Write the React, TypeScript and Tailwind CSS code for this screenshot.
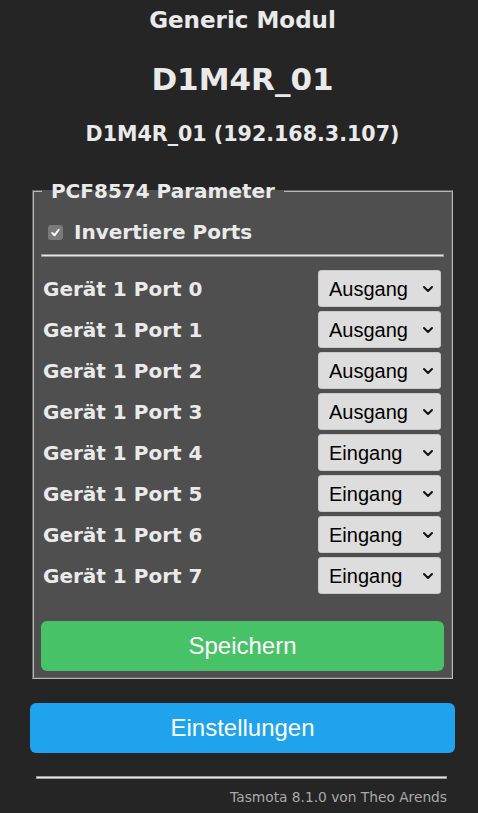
import React from 'react';

const ports = [
  { name: 'Gerät 1 Port 0', mode: 'Ausgang' },
  { name: 'Gerät 1 Port 1', mode: 'Ausgang' },
  { name: 'Gerät 1 Port 2', mode: 'Ausgang' },
  { name: 'Gerät 1 Port 3', mode: 'Ausgang' },
  { name: 'Gerät 1 Port 4', mode: 'Eingang' },
  { name: 'Gerät 1 Port 5', mode: 'Eingang' },
  { name: 'Gerät 1 Port 6', mode: 'Eingang' },
  { name: 'Gerät 1 Port 7', mode: 'Eingang' },
];

const Chevron = () => (
  <svg
    className="pointer-events-none absolute right-[7px] top-1/2 -translate-y-1/2"
    width="12"
    height="8"
    viewBox="0 0 12 8"
    fill="none"
    stroke="#111"
    strokeWidth="2"
    strokeLinecap="round"
    strokeLinejoin="round"
  >
    <path d="M2 2l4 4 4-4" />
  </svg>
);

const PortRow: React.FC<{ name: string; mode: string }> = ({ name, mode }) => (
  <div className="flex h-[37px] items-center justify-between">
    <b className="pl-[2px] text-[20px]">{name}</b>
    <div className="relative mr-[3px] w-[123px]">
      <select
        defaultValue={mode}
        className="h-[37px] w-full appearance-none rounded-[3px] border border-[#c8c8c8] bg-[#dddddd] pl-[10px] font-['Liberation_Sans',Arial,sans-serif] text-[20px] text-black"
      >
        <option>Eingang</option>
        <option>Ausgang</option>
      </select>
      <Chevron />
    </div>
  </div>
);

export default function App() {
  return (
    <div className="min-h-[813px] bg-[#252525] font-['DejaVu_Sans',Verdana,sans-serif] text-[#eaeaea]">
      <div className="ml-[30px] flex w-[425px] flex-col">
        <h3 className="h-[40px] text-center text-[23px] font-bold leading-[40px]">Generic Modul</h3>
        <h2 className="mt-[19px] h-[40px] text-center text-[31px] font-bold leading-[40px]">D1M4R_01</h2>
        <h3 className="mt-[15px] h-[40px] text-center text-[20.6px] font-bold leading-[40px]">
          D1M4R_01 (192.168.3.107)
        </h3>

        <fieldset className="mx-[2px] mt-[25px] border-2 border-[#b8b8b8] bg-[#4f4f4f] px-[7px] pb-[6px] [border-style:groove]">
          <legend className="ml-[1px] px-[2px] text-[20px] font-bold leading-[24px]">
            &nbsp;PCF8574 Parameter&nbsp;
          </legend>

          <div className="mt-[17px] flex h-[24px] items-center">
            <span className="ml-[7px] flex h-[15px] w-[15px] items-center justify-center rounded-[3px] bg-[#7a7a7a]">
              <svg width="11" height="11" viewBox="0 0 12 12" fill="none" stroke="#fff" strokeWidth="2.2" strokeLinecap="round" strokeLinejoin="round">
                <path d="M2.5 6.5l2.5 2.5 4.5-6" />
              </svg>
            </span>
            <b className="ml-[11px] text-[20px]">Invertiere Ports</b>
          </div>

          <div className="mt-[10px] h-[3px] border border-[#9a9a9a] bg-[#e6e6e6]" />

          <div className="mt-[13px] flex flex-col gap-[4px]">
            {ports.map((p) => (
              <PortRow key={p.name} name={p.name} mode={p.mode} />
            ))}
          </div>

          <button className="mt-[27px] h-[50px] w-full rounded-[6px] bg-[#47c266] font-['Liberation_Sans',Arial,sans-serif] text-[24px] text-white">
            Speichern
          </button>
        </fieldset>

        <button className="mt-[24px] h-[50px] w-full rounded-[6px] bg-[#1fa3ec] font-['Liberation_Sans',Arial,sans-serif] text-[24px] text-white">
          Einstellungen
        </button>

        <div className="ml-[6px] mr-[8px] mt-[23px] h-[3px] border border-[#9a9a9a] bg-[#e6e6e6]" />
        <div className="mr-[8px] mt-[8px] text-right text-[13.75px] text-[#aaaaaa]">
          Tasmota 8.1.0 von Theo Arends
        </div>
      </div>
    </div>
  );
}
